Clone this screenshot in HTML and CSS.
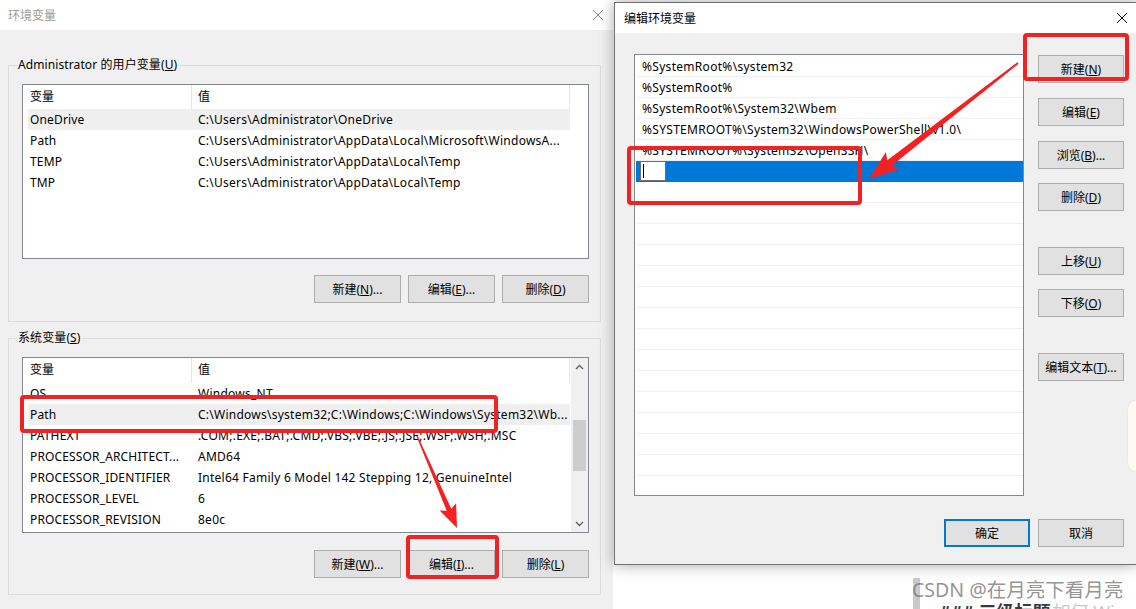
FILE: index.html
```html
<!DOCTYPE html>
<html lang="zh-CN">
<head>
<meta charset="utf-8">
<title>环境变量</title>
<link rel="stylesheet" href="styles.css">
</head>
<body>
<div class="desktop">
  <div class="page">
    <div class="page-bar"></div>
    <div class="page-heading">### 三级标题<span class="page-faint">如何 Wi</span></div>
  </div>

  <section class="win env">
    <header class="titlebar">
      <span class="title">环境变量</span>
      <svg class="close" viewBox="0 0 10 10"><path d="M0 0L10 10M10 0L0 10" stroke="#8a8a8a" stroke-width="1"/></svg>
    </header>
    <div class="env-body">
      <fieldset class="group user">
        <legend>Administrator 的用户变量(<u>U</u>)</legend>
        <div class="group-inner">
          <div class="listview">
            <div class="lv-main">
              <div class="lv-head"><div class="hc hc1">变量</div><div class="hc hc2">值</div></div>
              <div class="lv-row hot"><span class="c1">OneDrive</span><span class="c2">C:\Users\Administrator\OneDrive</span></div>
              <div class="lv-row"><span class="c1">Path</span><span class="c2">C:\Users\Administrator\AppData\Local\Microsoft\WindowsA...</span></div>
              <div class="lv-row"><span class="c1">TEMP</span><span class="c2">C:\Users\Administrator\AppData\Local\Temp</span></div>
              <div class="lv-row"><span class="c1">TMP</span><span class="c2">C:\Users\Administrator\AppData\Local\Temp</span></div>
            </div>
          </div>
          <div class="btns">
            <button class="btn">新建(<u>N</u>)...</button>
            <button class="btn">编辑(<u>E</u>)...</button>
            <button class="btn">删除(<u>D</u>)</button>
          </div>
        </div>
      </fieldset>

      <fieldset class="group sys">
        <legend>系统变量(<u>S</u>)</legend>
        <div class="group-inner">
          <div class="listview">
            <div class="lv-main">
              <div class="lv-head"><div class="hc hc1">变量</div><div class="hc hc2">值</div></div>
              <div class="lv-row"><span class="c1">OS</span><span class="c2">Windows_NT</span></div>
              <div class="lv-row hot"><span class="c1">Path</span><span class="c2">C:\Windows\system32;C:\Windows;C:\Windows\System32\Wb...</span></div>
              <div class="lv-row"><span class="c1">PATHEXT</span><span class="c2">.COM;.EXE;.BAT;.CMD;.VBS;.VBE;.JS;.JSE;.WSF;.WSH;.MSC</span></div>
              <div class="lv-row"><span class="c1">PROCESSOR_ARCHITECT...</span><span class="c2">AMD64</span></div>
              <div class="lv-row"><span class="c1">PROCESSOR_IDENTIFIER</span><span class="c2">Intel64 Family 6 Model 142 Stepping 12, GenuineIntel</span></div>
              <div class="lv-row"><span class="c1">PROCESSOR_LEVEL</span><span class="c2">6</span></div>
              <div class="lv-row"><span class="c1">PROCESSOR_REVISION</span><span class="c2">8e0c</span></div>
            </div>
            <div class="vscroll">
              <div class="sb-btn"><svg viewBox="0 0 9 6" class="chev"><polyline points="1,5 4.5,1.5 8,5" fill="none" stroke="#606060" stroke-width="1.3"/></svg></div>
              <div class="sb-track"><div class="sb-thumb"></div></div>
              <div class="sb-btn"><svg viewBox="0 0 9 6" class="chev"><polyline points="1,1 4.5,4.5 8,1" fill="none" stroke="#606060" stroke-width="1.3"/></svg></div>
            </div>
          </div>
          <div class="btns">
            <button class="btn">新建(<u>W</u>)...</button>
            <button class="btn">编辑(<u>I</u>)...</button>
            <button class="btn">删除(<u>L</u>)</button>
          </div>
        </div>
      </fieldset>
    </div>
  </section>

  <section class="win edit">
    <header class="titlebar">
      <span class="title">编辑环境变量</span>
      <svg class="close" viewBox="0 0 10 10"><path d="M0 0L10 10M10 0L0 10" stroke="#000" stroke-width="1"/></svg>
    </header>
    <div class="edit-body">
      <div class="pathlist">
        <div class="pr">%SystemRoot%\system32</div>
        <div class="pr">%SystemRoot%</div>
        <div class="pr">%SystemRoot%\System32\Wbem</div>
        <div class="pr">%SYSTEMROOT%\System32\WindowsPowerShell\v1.0\</div>
        <div class="pr">%SYSTEMROOT%\System32\OpenSSH\</div>
        <div class="pr sel"><div class="editbox"><span class="caret"></span></div></div>
        <div class="pr"></div><div class="pr"></div><div class="pr"></div><div class="pr"></div>
        <div class="pr"></div><div class="pr"></div><div class="pr"></div><div class="pr"></div>
        <div class="pr"></div><div class="pr"></div><div class="pr"></div><div class="pr"></div>
        <div class="pr"></div><div class="pr"></div><div class="pr"></div>
      </div>
      <div class="side">
        <button class="btn">新建(<u>N</u>)</button>
        <button class="btn g15">编辑(<u>E</u>)</button>
        <button class="btn g15">浏览(<u>B</u>)...</button>
        <button class="btn g14">删除(<u>D</u>)</button>
        <button class="btn g36">上移(<u>U</u>)</button>
        <button class="btn g14">下移(<u>O</u>)</button>
        <button class="btn g36">编辑文本(<u>T</u>)...</button>
      </div>
      <div class="footer">
        <button class="btn default">确定</button>
        <button class="btn">取消</button>
      </div>
    </div>
  </section>

  <div class="float-pill"></div>

  <svg class="marks" viewBox="0 0 1136 609" width="1136" height="609">
    <g fill="none" stroke="#f22222" stroke-width="4" stroke-linejoin="round">
      <rect x="22" y="397" width="474" height="34" rx="2"/>
      <rect x="408" y="537" width="89" height="40" rx="2"/>
      <rect x="1025" y="35" width="102" height="44" rx="2"/>
      <rect x="629" y="148" width="231" height="55" rx="2"/>
    </g>
    <g fill="#f22222">
      <polygon points="416.4,436.3 446.7,510.7 439.6,510.5 457,528 456.1,503.3 451.3,508.7 417.6,435.7"/>
      <polygon points="1017.4,62.2 887.3,160.2 885.9,151.9 869,179 899.5,169.3 891.7,165.8 1018.6,63.8"/>
    </g>
  </svg>

  <div class="watermark">CSDN @在月亮下看月亮</div>
</div>
</body>
</html>
```

FILE: styles.css
```css
* { box-sizing: border-box; }
html, body { margin: 0; padding: 0; }
body {
  width: 1136px;
  height: 609px;
  overflow: hidden;
  background: #fff;
  font-family: "Noto Sans", "Noto Sans CJK SC", sans-serif;
  font-size: 12px;
  color: #000;
}
u { text-decoration: underline; text-underline-offset: 1px; }

.desktop {
  position: relative;
  width: 1136px;
  height: 609px;
  overflow: hidden;
  background: #fff;
}

/* background web page peeking below the dialogs */
.page { position: absolute; left: 0; top: 0; width: 1136px; height: 609px; }
.page-bar {
  position: absolute;
  left: 913px;
  top: 578px;
  width: 7px;
  height: 40px;
  background: #c9c9c9;
}
.page-heading {
  position: absolute;
  left: 939px;
  top: 601px;
  font-size: 18px;
  line-height: 22px;
  font-weight: bold;
  color: #3a3a3a;
  white-space: nowrap;
}
.page-faint { font-weight: normal; color: #c8c8c8; margin-left: 2px; }

/* windows */
.win {
  position: absolute;
  display: flex;
  flex-direction: column;
  background: #f0f0f0;
}
.env { left: 0; top: 0; width: 613px; height: 609px; }
.titlebar {
  height: 30px;
  flex: none;
  background: #fff;
  display: flex;
  align-items: center;
  justify-content: space-between;
  padding-left: 8px;
  padding-right: 10px;
}
.env .titlebar { color: #9a9a9a; }
.close { width: 10px; height: 10px; display: block; }

.env-body { padding: 27px 0 0 8px; }
.group {
  margin: 0;
  padding: 0;
  border: 1px solid #dcdcdc;
  width: 593px;
  min-width: 0;
}
.group legend {
  margin-left: 8px;
  padding: 0 1px;
  line-height: 16px;
  letter-spacing: 0.1px;
}
.group-inner { padding: 11px 11px 18px 13px; }
.sys { margin-top: 8px; }
.sys .group-inner { padding-bottom: 16px; }

.listview {
  display: flex;
  height: 175px;
  border: 1px solid #828790;
  background: #fff;
  overflow: hidden;
}
.sys .listview { height: 176px; }
.lv-main { flex: 1; min-width: 0; }
.lv-head { display: flex; height: 24px; }
.sys .lv-head { height: 25px; }
.hc { border-right: 1px solid #e5e5e5; line-height: 24px; white-space: nowrap; }
.hc1 { width: 169px; padding-left: 7px; }
.hc2 { width: 378px; padding-left: 6px; }
.lv-row {
  display: flex;
  margin-left: 5px;
  width: 542px;
  height: 21px;
  line-height: 21px;
  white-space: nowrap;
  letter-spacing: 0.25px;
}
.lv-row.hot { background: #efefef; }
.lv-row .c1 { width: 163px; padding-left: 2px; overflow: hidden; flex: none; letter-spacing: 0.15px; }
.lv-row .c2 { padding-left: 7px; overflow: hidden; }

.vscroll {
  width: 17px;
  flex: none;
  background: #f0f0f0;
  display: flex;
  flex-direction: column;
}
.sb-btn { height: 17px; display: flex; align-items: center; justify-content: center; }
.chev { width: 9px; height: 6px; display: block; }
.sb-track { flex: 1; }
.sb-thumb { margin: 45px 2px 0; height: 51px; background: #cdcdcd; }

.btns { display: flex; justify-content: flex-end; gap: 7px; margin-top: 16px; }
.sys .btns { margin-top: 17px; }
.btn {
  width: 87px;
  height: 28px;
  flex: none;
  border: 1px solid #adadad;
  background: #e1e1e1;
  display: flex;
  align-items: center;
  justify-content: center;
  font: inherit;
  color: #000;
  padding: 0;
  white-space: nowrap;
}

/* edit dialog */
.edit {
  left: 614px;
  top: 2px;
  width: 523px;
  height: 563px;
  border: 1px solid #707070;
  box-shadow: 0 0 14px rgba(0, 0, 0, 0.35);
}
.edit .titlebar { padding-left: 9px; padding-right: 9px; }
.edit-body {
  display: grid;
  grid-template-columns: 390px 86px;
  column-gap: 14px;
  padding: 21px 0 0 19px;
}
.pathlist {
  height: 442px;
  border: 1px solid #828790;
  background: #fff;
  padding-top: 1px;
  overflow: hidden;
}
.pr {
  height: 21px;
  margin-left: 1px;
  border-bottom: 1px solid #f0f0f0;
  padding: 1px 0 0 6px;
  line-height: 20px;
  white-space: nowrap;
  letter-spacing: 0.3px;
}
.pr.sel {
  background: #0078d7;
  border-bottom-color: #0078d7;
  padding: 0 0 0 4px;
  display: flex;
  align-items: center;
}
.editbox {
  width: 26px;
  height: 20px;
  background: #fff;
  border: 1px solid #6d6d6d;
  padding: 2px 0 0 2px;
}
.caret { display: block; width: 1px; height: 14px; background: #000; }

.side { display: flex; flex-direction: column; padding-top: 1px; }
.side .btn { width: 86px; }
.side .g15 { margin-top: 15px; }
.side .g14 { margin-top: 14px; }
.side .g36 { margin-top: 36px; }
.footer {
  grid-column: 1 / 3;
  display: flex;
  justify-content: flex-end;
  gap: 8px;
  margin-top: 23px;
}
.footer .btn { width: 86px; }
.btn.default { border: 2px solid #0078d7; }

.float-pill {
  position: absolute;
  left: 1128px;
  top: 400px;
  width: 14px;
  height: 72px;
  background: #fcfaf3;
  border-radius: 10px 0 0 10px;
  box-shadow: 0 0 3px rgba(0, 0, 0, 0.08);
}

.marks { position: absolute; left: 0; top: 0; pointer-events: none; }

.watermark {
  position: absolute;
  left: 912px;
  top: 579px;
  font-size: 19.5px;
  line-height: 22px;
  color: rgba(120, 120, 120, 0.8);
  white-space: nowrap;
}
```
